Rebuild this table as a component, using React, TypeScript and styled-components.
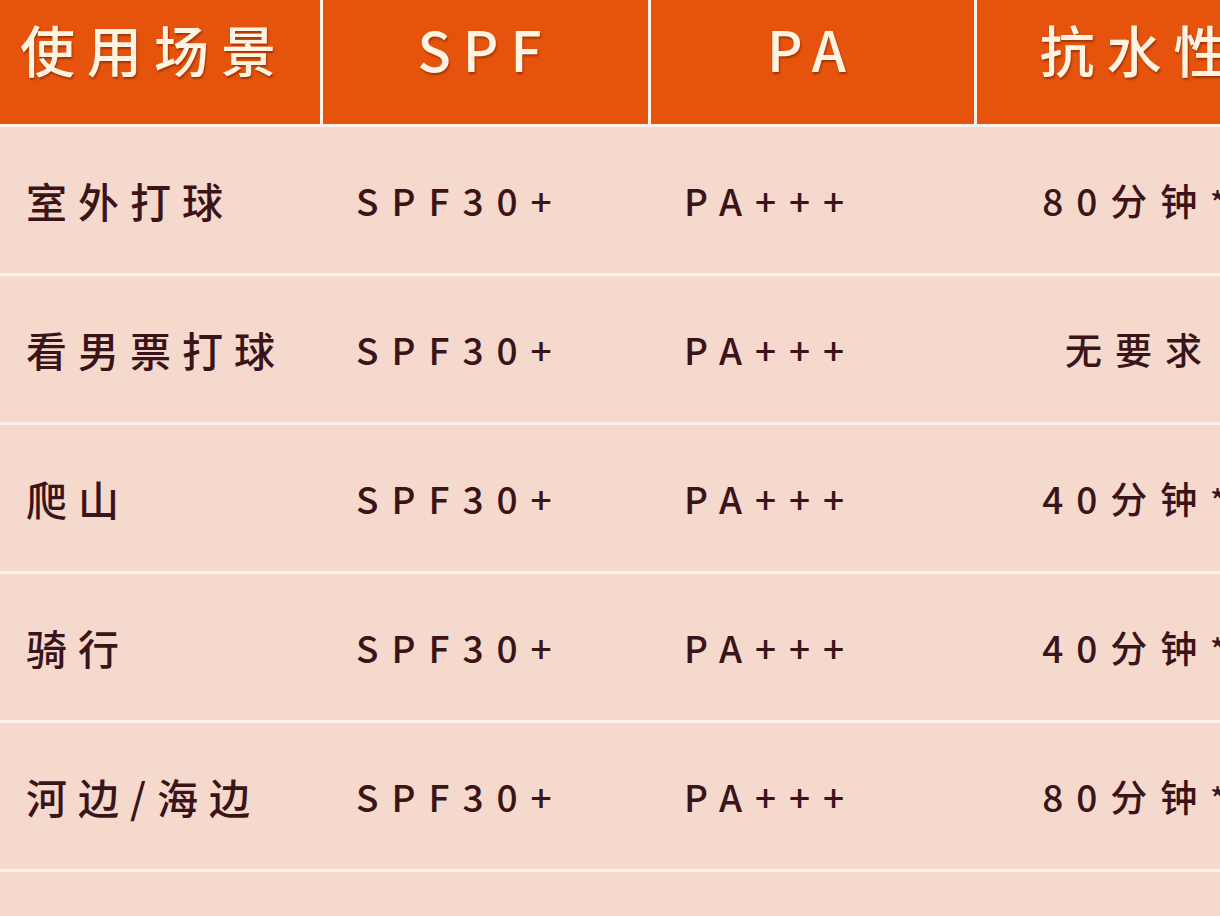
import styled, { createGlobalStyle } from "styled-components";

const GlobalStyle = createGlobalStyle`
  html, body {
    margin: 0;
    padding: 0;
    background: #fbf1ea;
    overflow: hidden;
  }
`;

type Align = "left" | "center";

const columns: { title: string; align: Align; pad: number; cjk: boolean }[] = [
  { title: "使用场景", align: "left", pad: 26, cjk: true },
  { title: "SPF", align: "left", pad: 33, cjk: false },
  { title: "PA", align: "left", pad: 33, cjk: false },
  { title: "抗水性", align: "center", pad: 0, cjk: false },
];

const rows = [
  ["室外打球", "SPF30+", "PA+++", "80分钟*"],
  ["看男票打球", "SPF30+", "PA+++", "无要求"],
  ["爬山", "SPF30+", "PA+++", "40分钟*"],
  ["骑行", "SPF30+", "PA+++", "40分钟*"],
  ["河边/海边", "SPF30+", "PA+++", "80分钟*"],
];

function App() {
  return (
    <>
      <GlobalStyle />
      <Table>
        <HeaderRow>
          {columns.map((c, i) => (
            <HeadCell key={i} $first={i === 0}>
              {c.title}
            </HeadCell>
          ))}
        </HeaderRow>
        {rows.map((r, i) => (
          <Row key={i}>
            {r.map((v, j) => (
              <Cell
                key={j}
                $align={columns[j].align}
                $pad={columns[j].pad}
                $cjk={columns[j].cjk}
              >
                {v.endsWith("*") ? (
                  <>
                    {v.slice(0, -1)}
                    <Star>*</Star>
                  </>
                ) : (
                  v
                )}
              </Cell>
            ))}
          </Row>
        ))}
        <Row />
      </Table>
    </>
  );
}

export default App;

const Table = styled.div`
  width: 1300px;
  display: flex;
  flex-direction: column;
  gap: 3px;
  background: #fbf1ea;
  font-family: "Noto Sans CJK SC", "Noto Sans", sans-serif;
`;

const HeaderRow = styled.div`
  display: grid;
  grid-template-columns: 320px 325px 323px 326px;
  column-gap: 3px;
  height: 124px;
`;

const HeadCell = styled.div<{ $first: boolean }>`
  background: #e5530c;
  color: #fff3e2;
  font-size: 55px;
  font-weight: 500;
  letter-spacing: 12px;
  display: flex;
  align-items: center;
  justify-content: ${(p) => (p.$first ? "flex-start" : "center")};
  padding: 0 0 28px ${(p) => (p.$first ? "20px" : "0")};
  text-shadow: 1px 2px 2px rgba(110, 30, 0, 0.55);
`;

const Row = styled.div`
  display: grid;
  grid-template-columns: 320px 325px 323px 326px;
  column-gap: 3px;
  height: 146px;
  background: #f5d9cc;
`;

const Cell = styled.div<{ $align: Align; $pad: number; $cjk: boolean }>`
  display: flex;
  align-items: center;
  justify-content: ${(p) => (p.$align === "center" ? "center" : "flex-start")};
  padding-left: ${(p) => p.$pad}px;
  color: #3a1419;
  font-size: ${(p) => (p.$cjk ? 41 : 37)}px;
  font-weight: 500;
  letter-spacing: ${(p) => (p.$cjk ? 11 : 13)}px;
  white-space: nowrap;
`;

const Star = styled.span`
  font-size: 30px;
  align-self: flex-start;
  margin-top: 52px;
`;
